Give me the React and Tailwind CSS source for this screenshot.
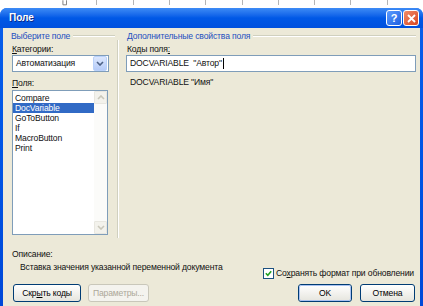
import React from "react";

function Chevron({ className = "", color = "#4D6185", up = false }) {
  return (
    <svg width="8" height="5" viewBox="0 0 8 5" className={className}>
      <path
        d={up ? "M1 4 L4 1 L7 4" : "M1 1 L4 4 L7 1"}
        fill="none"
        stroke={color}
        strokeWidth="1.6"
      />
    </svg>
  );
}

function Btn({ children, disabled = false, def = false, className = "" }) {
  return (
    <div
      className={
        "h-[18px] flex items-center justify-center rounded-[3px] border " +
        (disabled
          ? "border-[#C9C7BA] bg-[#F4F3EE] text-[#ACA899] "
          : "border-[#003C74] bg-gradient-to-b from-white to-[#E6E5DE] text-black ") +
        className
      }
    >
      <div
        className={
          "w-full h-full flex items-center justify-center rounded-[2px] " +
          (def ? "border border-[#A9C2F1]" : "")
        }
      >
        {children}
      </div>
    </div>
  );
}

export default function App() {
  const ticks = Array.from({ length: 9 });
  return (
    <div className="w-[423px] h-[306px] bg-white overflow-hidden flex flex-col font-['Liberation_Sans',Arial,sans-serif] text-[8.6px] tracking-[-0.15px] leading-none text-[#111]">
      {/* ruler strip */}
      <div className="h-[8px] shrink-0 flex items-start">
        <div className="w-[68px]" />
        <svg width="6" height="6" viewBox="0 0 6 6">
          <path d="M1 0 V5 H5 V0" fill="none" stroke="#777" strokeWidth="1" />
        </svg>
        <div className="w-[32px]" />
        {ticks.map((_, i) => (
          <div key={i} className="w-[36.3px] h-[5px] border-l border-[#B5B5B5] shrink-0" />
        ))}
      </div>

      {/* window */}
      <div className="flex-1 flex flex-col rounded-t-[7px] bg-gradient-to-b from-[#0A5FEA] via-[#0055E5] to-[#0048D8] overflow-hidden">
        {/* title bar */}
        <div className="h-[20px] shrink-0 flex items-center pl-[9px] pr-[4px] bg-gradient-to-b from-[#3D8BF5] via-[#0058E6] to-[#0050DE]">
          <div className="text-white font-bold text-[10px] tracking-normal [text-shadow:1px_1px_0_#0A2A8A]">Поле</div>
          <div className="flex-1" />
          <div className="w-[16px] h-[16px] rounded-[3px] border border-white bg-gradient-to-br from-[#5A9BFF] to-[#1F5FE0] flex items-center justify-center text-white font-bold text-[11px] mr-[1px]">
            ?
          </div>
          <div className="w-[16px] h-[16px] rounded-[3px] border border-white bg-gradient-to-br from-[#F08A68] to-[#D8441C] flex items-center justify-center">
            <svg width="9" height="9" viewBox="0 0 9 9">
              <path d="M1 1 L8 8 M8 1 L1 8" stroke="white" strokeWidth="1.8" />
            </svg>
          </div>
        </div>

        {/* body */}
        <div className="flex-1 mx-[3px] bg-[#ECE9D8] flex flex-col pl-[8px] pt-[3px]">
          <div className="flex h-[207px]">
            {/* left column */}
            <div className="w-[104px] flex flex-col shrink-0">
              <div className="h-[10px] flex items-center">
                <span className="text-[#1E4FC0] mr-[3px]">Выберите поле</span>
                <div className="flex-1 h-[2px] border-t border-b border-t-[#D0D0BF] border-b-white" />
              </div>
              <div className="h-[10px] mt-[3px] flex items-center pl-[1px]">
                <span><span className="underline">К</span>атегории:</span>
              </div>
              <div className="mt-[1px] ml-[1px] w-[97px] h-[17px] border border-[#7F9DB9] bg-white flex items-center">
                <span className="pl-[3px] flex-1">Автоматизация</span>
                <div className="w-[14px] h-[15px] mr-[1px] rounded-[2px] bg-gradient-to-b from-[#DCE7FD] to-[#B5CBF8] border border-[#B9D1FA] flex items-center justify-center">
                  <Chevron />
                </div>
              </div>
              <div className="h-[10px] mt-[6px] flex items-center pl-[1px]">
                <span><span className="underline">П</span>оля:</span>
              </div>
              <div className="mt-[2px] ml-[1px] w-[96px] h-[145px] border border-[#7F9DB9] bg-white flex">
                <div className="flex-1 flex flex-col pt-[2px]">
                  {["Compare", "DocVariable", "GoToButton", "If", "MacroButton", "Print"].map((t) => (
                    <div
                      key={t}
                      className={
                        "h-[10px] flex items-center pl-[2px] " +
                        (t === "DocVariable" ? "bg-[#316AC5] text-white" : "")
                      }
                    >
                      {t}
                    </div>
                  ))}
                </div>
                <div className="w-[13px] flex flex-col justify-between bg-[#FBFBF9]">
                  <div className="h-[13px] bg-[#F3F2EC] border border-[#E8E7E0] rounded-[1px] flex items-center justify-center">
                    <Chevron up color="#C9C7BA" />
                  </div>
                  <div className="h-[13px] bg-[#F3F2EC] border border-[#E8E7E0] rounded-[1px] flex items-center justify-center">
                    <Chevron color="#C9C7BA" />
                  </div>
                </div>
              </div>
            </div>

            {/* separator */}
            <div className="ml-[2px] mt-[9px] w-[2px] border-l border-r border-l-[#D0D0BF] border-r-white shrink-0" />

            {/* right column */}
            <div className="ml-[7px] w-[290px] flex flex-col">
              <div className="h-[10px] flex items-center pl-[1px]">
                <span className="text-[#1E4FC0] mr-[3px]">Дополнительные свойства поля</span>
                <div className="flex-1 h-[2px] border-t border-b border-t-[#D0D0BF] border-b-white" />
              </div>
              <div className="h-[10px] mt-[3px] flex items-center pl-[1px]">
                <span>Коды поля<span className="underline">:</span></span>
              </div>
              <div className="mt-[1px] h-[17px] border border-[#7F9DB9] bg-white flex items-center pl-[3px]">
                <span className="whitespace-pre">DOCVARIABLE  "Автор"</span>
                <div className="w-[1px] h-[11px] bg-black ml-[1px]" />
              </div>
              <div className="h-[10px] mt-[5px] flex items-center pl-[4px]">DOCVARIABLE "Имя"</div>
            </div>
          </div>

          {/* description */}
          <div className="h-[10px] mt-[11px] flex items-center pl-[1px]">Описание:</div>
          <div className="h-[18px] mt-[3px] flex">
            <div className="h-[10px] flex items-center pl-[9px]">
              Вставка значения указанной переменной документа
            </div>
            <div className="flex-1" />
            <div className="self-end flex items-center mr-[6px] mb-[1px]">
              <div className="w-[11px] h-[11px] border border-[#1C5180] bg-white flex items-center justify-center mr-[2px]">
                <svg width="7" height="7" viewBox="0 0 7 7">
                  <path d="M0.8 3.3 L2.8 5.3 L6.2 1.3" fill="none" stroke="#21A121" strokeWidth="1.6" />
                </svg>
              </div>
              <span>
                Со<span className="underline">х</span>ранять формат при обновлении
              </span>
            </div>
          </div>

          {/* buttons */}
          <div className="mt-[4px] flex items-center">
            <Btn className="ml-[2px] w-[68px]">
              <span>
                Скр<span className="underline">ы</span>ть коды
              </span>
            </Btn>
            <Btn disabled className="ml-[7px] w-[61px]">Параметры...</Btn>
            <div className="flex-1" />
            <Btn def className="w-[54px]">OK</Btn>
            <Btn className="ml-[8px] mr-[5px] w-[55px]">Отмена</Btn>
          </div>
        </div>
      </div>
    </div>
  );
}
